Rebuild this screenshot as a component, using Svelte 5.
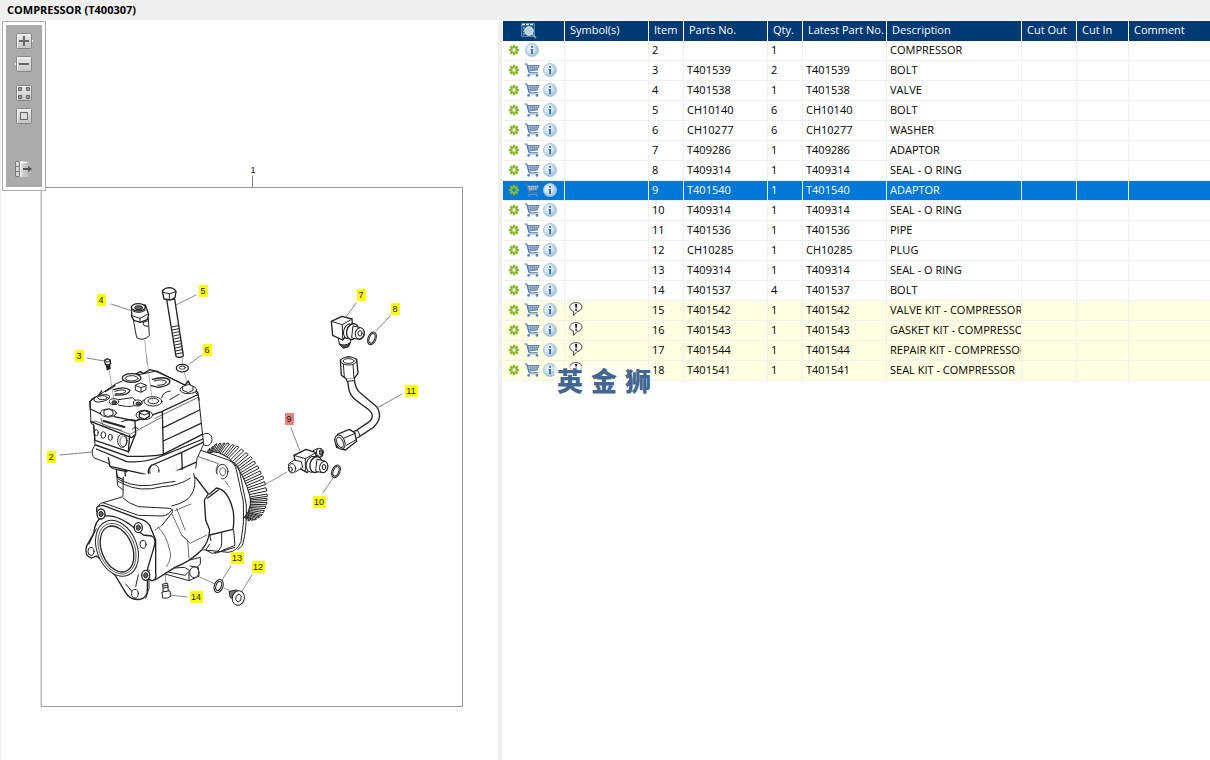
<script>
  const columns = [
    { key: 'item', label: 'Item', width: 35 },
    { key: 'part', label: 'Parts No.', width: 84 },
    { key: 'qty', label: 'Qty.', width: 35 },
    { key: 'latest', label: 'Latest Part No.', width: 84 },
    { key: 'desc', label: 'Description', width: 135 },
    { key: 'cutOut', label: 'Cut Out', width: 55 },
    { key: 'cutIn', label: 'Cut In', width: 52 },
    { key: 'comment', label: 'Comment' },
  ]

  const row = (item, part, qty, desc, kit = false) => ({ item, part, qty, latest: part, desc, kit })

  const rows = [
    row(2, '', 1, 'COMPRESSOR'),
    row(3, 'T401539', 2, 'BOLT'),
    row(4, 'T401538', 1, 'VALVE'),
    row(5, 'CH10140', 6, 'BOLT'),
    row(6, 'CH10277', 6, 'WASHER'),
    row(7, 'T409286', 1, 'ADAPTOR'),
    row(8, 'T409314', 1, 'SEAL - O RING'),
    row(9, 'T401540', 1, 'ADAPTOR'),
    row(10, 'T409314', 1, 'SEAL - O RING'),
    row(11, 'T401536', 1, 'PIPE'),
    row(12, 'CH10285', 1, 'PLUG'),
    row(13, 'T409314', 1, 'SEAL - O RING'),
    row(14, 'T401537', 4, 'BOLT'),
    row(15, 'T401542', 1, 'VALVE KIT - COMPRESSOR', true),
    row(16, 'T401543', 1, 'GASKET KIT - COMPRESSOR', true),
    row(17, 'T401544', 1, 'REPAIR KIT - COMPRESSOR', true),
    row(18, 'T401541', 1, 'SEAL KIT - COMPRESSOR', true),
  ]

  let selected = $state(9)

  // callout number, label centre, leader line end points
  const callouts = [
    { n: 2, x: 51, y: 457, line: [60, 455, 92, 452] },
    { n: 3, x: 79, y: 356, line: [87, 358, 104, 361] },
    { n: 4, x: 101, y: 300, line: [111, 304, 132, 311] },
    { n: 5, x: 203, y: 291, line: [196, 295, 176, 305] },
    { n: 6, x: 207, y: 350, line: [202, 355, 189, 364] },
    { n: 7, x: 361, y: 295, line: [356, 303, 346, 317] },
    { n: 8, x: 395, y: 309, line: [390, 316, 376, 331] },
    { n: 9, x: 289, y: 419, line: [291, 428, 300, 451] },
    { n: 10, x: 319, y: 502, line: [323, 493, 333, 478] },
    { n: 11, x: 411, y: 391, line: [402, 394, 377, 408] },
    { n: 12, x: 258, y: 567, line: [252, 575, 242, 591] },
    { n: 13, x: 237, y: 558, line: [231, 566, 222, 580] },
    { n: 14, x: 196, y: 597, line: [187, 597, 170, 595] },
  ]

  const outer = [[400, 284], [425, 266], [455, 264], [490, 275], [525, 302], [550, 336], [568, 375], [577, 420], [575, 450], [562, 480], [540, 495], [514, 497]]
  const inner = [[395, 298], [415, 290], [434, 294], [460, 308], [485, 334], [502, 362], [516, 395], [526, 428], [526, 450], [520, 470], [514, 482], [508, 488]]

  function along(points, t) {
    const p = t * (points.length - 1)
    const i = Math.min(Math.floor(p), points.length - 2)
    const f = p - i
    return points[i].map((v, k) => Math.round(v + (points[i + 1][k] - v) * f))
  }

  const TEETH = 27
  const teeth = Array.from({ length: TEETH }, (_, i) => {
    const a = along(inner, i / TEETH)
    const b = along(outer, i / TEETH)
    const c = along(outer, (i + 0.5) / TEETH)
    const d = along(inner, (i + 0.5) / TEETH)
    return `M${a} L${b} L${c} L${d}`
  }).join(' ')
</script>

{#snippet gear()}
  <svg width="12" height="12" viewBox="0 0 12 12">
    <g stroke="#84b52c" stroke-width="2.2">
      <path d="M6 0.8V11.2M0.8 6H11.2M2.3 2.3L9.7 9.7M9.7 2.3L2.3 9.7" />
    </g>
    <circle cx="6" cy="6" r="3.8" fill="#8bbb30" />
    <circle cx="6" cy="6" r="1.7" class="hole" />
  </svg>
{/snippet}

{#snippet cart()}
  <svg width="16" height="14" viewBox="0 0 16 14" fill="none">
    <path d="M0.5 1H2.8L5 9.5" stroke="#54779f" stroke-width="1.2" />
    <path d="M3.4 2.5H15.2L13.2 7L4.8 8Z" fill="#c3d2e6" stroke="#4f74a8" stroke-width="0.9" />
    <path d="M4 4.3H14.4M4.4 6H13.6M6 2.5L6.6 7.6M8.2 2.5L8.6 7.4M10.4 2.5V7.2M12.6 2.5L12 7" stroke="#5c80b0" stroke-width="0.6" />
    <path d="M4.8 9.8H13.8" stroke="#54779f" stroke-width="1.2" />
    <path d="M4.6 11.6H13" stroke="#9db4d0" stroke-width="0.6" />
    <circle cx="4.6" cy="12.4" r="1.3" fill="#4a86c4" />
    <circle cx="13" cy="12.4" r="1.3" fill="#4a86c4" />
  </svg>
{/snippet}

{#snippet info()}
  <svg width="14" height="14" viewBox="0 0 14 14">
    <circle cx="7" cy="7" r="6.6" fill="url(#infoFill)" stroke="#a5c4dc" stroke-width="0.8" />
    <path d="M6 3H8V4.8H6ZM5.4 6H8V11H6V7H5.4Z" fill="#4474aa" />
  </svg>
{/snippet}

{#snippet toolIcon(kind)}
  <svg width="20" height="18" viewBox="0 0 20 18">
    {#if kind === 'in'}
      <path d="M17.5 6L20 9L17.5 12Z" fill="#eee" stroke="#858585" stroke-width="0.6" />
    {:else if kind === 'out'}
      <path d="M2.5 6L0 9L2.5 12Z" fill="#eee" stroke="#858585" stroke-width="0.6" />
    {/if}
    {#if kind === 'toggle'}
      <rect x="1" y="1" width="16" height="16" fill="url(#fade)" />
      <path d="M1.5 1.5H5.5V16.5H1.5ZM1.5 6.5H5.5M1.5 11.5H5.5" fill="#d8d8d8" stroke="#7c7c7c" />
      <path d="M6.5 2V16M7 2.5H13" stroke="#fff" />
      <path d="M9 9H15" stroke="#555" stroke-width="2" />
      <path d="M14 6L18 9L14 12Z" fill="#555" />
    {:else}
      <rect x="2.5" y="1.5" width="15" height="15" rx="1" fill="url(#btnFill)" stroke="#858585" />
      <path d="M3.5 15.5V2.5H16.5" fill="none" stroke="#f4f4f4" />
    {/if}
    {#if kind === 'in'}
      <path d="M5 9H15M10 4V14" stroke="#666" stroke-width="2" />
    {:else if kind === 'out'}
      <path d="M5 9H15" stroke="#666" stroke-width="2" />
    {:else if kind === 'tiles'}
      <path d="M4.5 3.5H7.5V6.5H4.5ZM12.5 3.5H15.5V6.5H12.5ZM4.5 11.5H7.5V14.5H4.5ZM12.5 11.5H15.5V14.5H12.5Z" fill="#999" stroke="#666" />
    {:else if kind === 'fit'}
      <rect x="6.5" y="5.5" width="7" height="7" fill="#ddd" stroke="#666" />
    {/if}
  </svg>
{/snippet}

<svg class="defs" width="0" height="0" aria-hidden="true">
  <defs>
    <radialGradient id="infoFill" cx="0.4" cy="0.4">
      <stop offset="0" stop-color="#f2f8fc" />
      <stop offset="0.6" stop-color="#d3e4f1" />
      <stop offset="1" stop-color="#a9c8e0" />
    </radialGradient>
    <linearGradient id="btnFill" x2="0" y2="1">
      <stop offset="0" stop-color="#ececec" />
      <stop offset="1" stop-color="#c4c4c4" />
    </linearGradient>
    <linearGradient id="fade">
      <stop offset="0.3" stop-color="#e2e2e2" />
      <stop offset="1" stop-color="#ababab" />
    </linearGradient>
  </defs>
</svg>

<div class="app">
  <h1>COMPRESSOR (T400307)</h1>

  <main>
    <section class="drawing">
      <div class="toolbar">
        <div class="tools">
          <button aria-label="Zoom in">{@render toolIcon('in')}</button>
          <button aria-label="Zoom out">{@render toolIcon('out')}</button>
          <button class="spaced" aria-label="Tile view">{@render toolIcon('tiles')}</button>
          <button aria-label="Fit to window">{@render toolIcon('fit')}</button>
          <button class="last" aria-label="Toggle list">{@render toolIcon('toggle')}</button>
        </div>
      </div>

      <svg class="diagram" viewBox="0 20 498 740" fill="none" stroke="#222" stroke-linejoin="round" stroke-linecap="round">
        <rect x="41.5" y="187.5" width="421" height="519" stroke="#999" />
        <path d="M252.5 176V187" stroke="#888" />
        <text class="number" x="253" y="173">1</text>

        <!-- axis lines -->
        <g stroke="#777" stroke-width="0.8">
          <path d="M266 484L287 472M193 574L215 584M224 588L232 592M165 573L166 583" />
        </g>

        <!-- cylinder head and drive gear -->
        <g transform="translate(75 355) scale(0.33333)" stroke-width="3">
          <path d={teeth} fill="#fff" />
          <path d="M395 298L415 290L434 294L460 308L485 334L502 362L516 395L526 428L526 450L520 470L508 488" />

          <path d="M380 242C394 228 412 236 411 254C410 270 396 278 384 268" fill="#fff" />
          <path d="M372 284L460 315Q478 322 484 345L505 440Q510 500 498 560Q485 590 460 592L340 580V300Z" fill="#fff" />
          <path d="M466 318L480 325Q490 332 494 350L514 450Q516 520 503 570L488 584" />
          <ellipse cx="442" cy="350" rx="17" ry="22" />
          <ellipse cx="443" cy="350" rx="9" ry="12" stroke-width="2" />
          <path d="M370 305L430 326Q420 340 424 358M360 345L385 355L380 378L362 372M362 375Q395 400 405 430M450 378Q470 400 480 440" stroke-width="2" />

          <path d="M45 140L48 205L56 210L60 270L52 285Q50 310 66 312L100 325L108 338L124 344L128 370L150 385Q200 408 260 402Q330 395 358 372L366 310L386 268L370 120L340 96L246 48L175 62L120 88L70 122Z" fill="#fff" />
          <path d="M45 140Q52 128 68 125L80 108M90 110L120 92M175 62L196 50L205 56L225 44L246 50L330 90L340 78L348 96L368 112L372 135" stroke-width="4" />
          <path d="M45 140L46 162L84 180M118 185L180 198L260 170L366 120M48 200L170 248L182 238M180 198L182 236L160 292M262 170L265 295" stroke-width="4" />
          <path d="M240 190L368 128M48 202L60 198L165 238L258 188M78 190L84 212L140 226" stroke-width="2" />
          <path d="M56 210L60 256L160 290L164 242M265 218L374 165M265 258L378 205M264 298L382 238M62 270L158 304Q230 305 264 298M64 282L155 320Q210 325 268 300L384 252" stroke-width="4" />
          <path d="M100 308L105 334L228 362M232 330L320 292L384 262M228 364Q210 350 230 330M320 292L322 345M124 344L156 350M150 348L153 384M128 366Q190 398 252 388Q325 380 360 352M245 362L300 350L362 322" stroke-width="4" />
          <ellipse cx="238" cy="347" rx="14" ry="18" fill="#fff" />

          <g fill="#fff">
            <ellipse cx="170" cy="69" rx="28" ry="13" stroke-width="4" />
            <ellipse cx="170" cy="70" rx="19" ry="8" />
            <path d="M232 73Q270 62 284 76Q288 92 250 97L228 92" stroke-width="4" />
            <path d="M238 78Q262 70 274 80Q274 90 248 91" />
            <path d="M116 104Q150 92 165 106Q160 122 120 120" stroke-width="4" />
            <path d="M120 109Q144 100 153 109Q148 118 122 116" />
            <ellipse cx="80" cy="130" rx="24" ry="10" transform="rotate(-12 80 130)" />
            <ellipse cx="82" cy="128" rx="14" ry="6" />
            <ellipse cx="340" cy="104" rx="25" ry="12" />
            <path d="M324 94L340 88L354 94V106L340 113L324 106Z" />
            <path d="M182 90L196 84L213 90V104L198 112L182 106Z" />
            <path d="M182 92L198 98L213 92M198 98V110" />
            <ellipse cx="234" cy="139" rx="27" ry="14" />
            <ellipse cx="235" cy="138" rx="16" ry="8" />
            <ellipse cx="117" cy="140" rx="14" ry="9" />
            <ellipse cx="118" cy="142" rx="7" ry="5" fill="#555" />
            <ellipse cx="188" cy="144" rx="13" ry="9" />
            <ellipse cx="190" cy="146" rx="7" ry="5" fill="#555" />
            <ellipse cx="100" cy="174" rx="24" ry="12" />
            <path d="M88 166L102 162L114 168V180L98 185L88 180Z" />
            <ellipse cx="208" cy="180" rx="25" ry="14" />
            <path d="M193 172L208 166L223 172V184L208 193L193 186Z" stroke-width="4" />
            <path d="M193 174L208 180L223 174" />
          </g>
          <path d="M130 150Q160 158 178 152M130 134L172 128L182 136M200 140L208 134M260 128Q264 110 286 108M284 134L312 118M140 200Q170 190 182 196M172 222Q180 212 190 222" />
          <ellipse cx="64" cy="233" rx="6" ry="9" />
          <ellipse cx="85" cy="240" rx="7" ry="10" />
          <ellipse cx="106" cy="247" rx="6" ry="9" />
          <ellipse cx="142" cy="257" rx="14" ry="20" />
          <ellipse cx="145" cy="259" rx="10" ry="16" stroke-width="2" />
          <path d="M86 198L148 216" stroke-width="6" />
          <path d="M124 350L128 392L148 408Q220 430 300 412L350 385M130 380Q200 418 300 398L352 372" />
          <path d="M103 48L117 135M214 0L232 136M322 8V30M328 50L338 92" stroke="#888" stroke-width="2" />
        </g>

        <!-- crankcase and front flange -->
        <g transform="translate(75 480) scale(0.33333)" stroke-width="3">
          <path d="M145 -10V55L76 72L60 110L70 240L150 330L215 300L300 262L345 235L392 205L404 182L480 170L500 60L404 -40Z" fill="#fff" stroke="none" />
          <path d="M145 -8L144 50L84 68Q66 72 66 94M145 55Q160 70 190 80L285 85Q298 88 290 100L262 135M84 68L190 106L262 108Q284 104 290 90M145 12Q195 38 262 20Q310 18 345 -5M140 2Q190 28 260 10L300 4M356 -20Q368 20 345 50Q330 68 290 78" />
          <path d="M362 -8L400 42L388 60L392 120L404 150Q402 185 380 210Q345 245 300 262L240 300M404 42L424 24Q460 28 475 95Q478 125 474 148L404 165M398 54L430 30" stroke-width="4" />
          <path d="M290 100L320 165L345 190L396 165M305 85L330 150M320 165L338 180L342 235M300 92L348 72M262 135L240 150M250 142Q275 165 285 215Q292 230 275 260" stroke-width="2" />
          <path d="M404 165L408 182M440 160V190Q438 216 412 220L392 210L404 192M440 212L480 196L476 150M420 220L480 202" />

          <path d="M66 94Q60 76 84 76L190 116Q210 118 224 136L242 180V280Q246 300 230 302L190 280L80 120Z" fill="#fff" stroke-width="4" />
          <path d="M56 160L34 200Q28 230 50 234L64 228L80 240L120 285L150 335Q165 362 195 358Q218 352 217 330L218 265L236 205Q246 176 230 168L205 165L160 130Q110 98 80 112Q60 122 56 160Z" fill="#fff" stroke-width="4" />
          <path d="M212 355L222 325V270M42 192L64 146M152 312L184 350M190 284L182 320" />
          <ellipse cx="126" cy="205" rx="60" ry="87" transform="rotate(-22 126 205)" fill="#fff" />
          <ellipse cx="126" cy="206" rx="53" ry="79" transform="rotate(-22 126 206)" stroke-width="2" />
          <ellipse cx="126" cy="207" rx="46" ry="72" transform="rotate(-22 126 207)" stroke-width="4" />
          <g fill="#fff">
            <ellipse cx="48" cy="214" rx="9" ry="12" />
            <ellipse cx="204" cy="193" rx="9" ry="12" />
            <ellipse cx="180" cy="341" rx="10" ry="13" />
          </g>
          {#each [[78, 102], [190, 143], [212, 286]] as [x, y]}
            <ellipse cx={x} cy={y} rx="12" ry="15" fill="#fff" stroke-width="4" />
            <ellipse cx={x} cy={y} rx="6" ry="8" fill="#666" />
          {/each}

          <path d="M270 282L342 302L372 288L370 262L345 258M280 276L330 286L345 272L328 262L300 264M342 302V280M345 240L376 232V252L366 262" />
          <ellipse cx="358" cy="277" rx="14" ry="16" fill="#fff" />
          <path d="M264 312L278 310L280 334L266 336ZM264 318L278 316M265 324L279 322" />
          <path d="M262 336L284 332L288 348Q278 358 264 354Z" fill="#fff" />
          <ellipse cx="431" cy="318" rx="13" ry="20" transform="rotate(20 431 318)" fill="#fff" />
          <ellipse cx="431" cy="318" rx="8" ry="14" transform="rotate(20 431 318)" />
          <path d="M464 334L484 330L502 344L480 360L466 352Z" fill="#777" />
          <ellipse cx="490" cy="354" rx="18" ry="22" transform="rotate(15 490 354)" fill="#fff" />
          <path d="M484 348L492 342L499 348L497 361L489 366L483 360Z" />
        </g>

        <!-- adaptors and pipe -->
        <g transform="translate(270 280) scale(0.33333)" stroke-width="3" fill="#fff">
          <path d="M205 176L208 192L220 204L236 200L242 186V174Z" />
          <path d="M208 192Q225 200 240 188L232 202L220 204Z" fill="#555" />
          <path d="M184 124L216 109L246 117L248 145L218 180L188 166Z" stroke-width="4" />
          <path d="M184 124L217 134L246 117M217 134L218 180" />
          <ellipse cx="236" cy="154" rx="15" ry="22" transform="rotate(15 236 154)" />
          <ellipse cx="248" cy="155" rx="18" ry="24" transform="rotate(15 248 155)" stroke-width="4" />
          <path d="M250 138L272 143Q286 150 283 166Q278 180 266 178L246 174Z" />
          <ellipse cx="269" cy="160" rx="13" ry="17" transform="rotate(15 269 160)" />
          <ellipse cx="270" cy="160" rx="6" ry="8" />
          <ellipse cx="306" cy="175" rx="12" ry="20" transform="rotate(22 306 175)" />
          <ellipse cx="306" cy="175" rx="8" ry="15" transform="rotate(22 306 175)" />

          <path d="M232 296L236 325Q240 348 262 364L294 388Q320 408 294 428L252 456L264 472L308 444Q342 414 320 380L272 340Q256 328 253 298Z" stroke-width="4" />
          <path d="M211 240L236 230L260 238L264 280L252 296L230 298L214 286Z" stroke-width="4" />
          <path d="M230 298V304L254 302V294M220 252L223 292M249 252L252 294" />
          <ellipse cx="236" cy="243" rx="24" ry="12" />
          <ellipse cx="236" cy="243" rx="16" ry="7" />
          <path d="M250 454L264 452L270 468L258 476" />
          <path d="M194 478L204 462L238 448L254 458L260 484L226 510L200 502Z" stroke-width="4" />
          <path d="M222 474L256 460M229 496L260 478" />
          <ellipse cx="210" cy="486" rx="14" ry="22" transform="rotate(-22 210 486)" />
          <ellipse cx="210" cy="487" rx="9" ry="16" transform="rotate(-22 210 487)" />

          <path d="M130 512L144 505L160 512L158 528L146 534Z" />
          <ellipse cx="149" cy="517" rx="10" ry="12" />
          <ellipse cx="153" cy="517" rx="5" ry="8" fill="#777" />
          <path d="M72 526L108 508L138 518L136 545L112 578L90 566L76 548Z" stroke-width="4" />
          <path d="M72 526L106 536L138 518M106 536V575" />
          <path d="M56 552L72 540L94 545L98 562L76 576L60 574Z" />
          <ellipse cx="66" cy="565" rx="11" ry="14" />
          <ellipse cx="62" cy="568" rx="5" ry="7" />
          <ellipse cx="127" cy="553" rx="18" ry="24" transform="rotate(15 127 553)" />
          <ellipse cx="138" cy="554" rx="18" ry="24" transform="rotate(15 138 554)" stroke-width="4" />
          <path d="M142 538L164 543Q176 550 173 566Q168 580 156 578L138 574Z" />
          <ellipse cx="161" cy="561" rx="12" ry="17" transform="rotate(15 161 561)" />
          <ellipse cx="162" cy="561" rx="5" ry="8" />
          <ellipse cx="198" cy="574" rx="12" ry="20" transform="rotate(22 198 574)" />
          <ellipse cx="198" cy="574" rx="8" ry="15" transform="rotate(22 198 574)" />
        </g>

        <!-- valve, long bolt, screw and washer -->
        <g transform="translate(60 275) scale(0.33333)" stroke-width="3" fill="#fff">
          <path d="M219 130L230 188Q250 200 268 182L265 130Z" />
          <path d="M215 98V125L222 136L240 142L262 134L266 118L256 90Z" stroke-width="4" />
          <path d="M216 122L240 130L262 118M240 130V142M220 108Q235 118 256 106M248 140L252 152L264 154M250 142L262 138" />
          <ellipse cx="235" cy="97" rx="21" ry="11" stroke-width="4" />
          <ellipse cx="236" cy="98" rx="12" ry="6" fill="#666" />
          <path d="M254 196L262 268" stroke="#888" stroke-width="2" />
          <path d="M320 74L348 244Q358 252 370 242L344 72Z" stroke-width="4" />
          <path d="M336 156L354 152M338 165L356 161M339 174L357 170M341 183L358 179M342 192L360 188M343 201L361 197M345 210L363 206M346 219L364 215M347 228L366 224M348 237L368 233" />
          <path d="M307 48Q314 38 330 38Q344 40 348 50L345 68L332 75L312 72Z" stroke-width="4" />
          <path d="M307 52L328 56L348 50M328 56V74" />
          <path d="M134 256L140 252L150 254L152 266L144 271L136 268ZM139 270L149 270L150 281L142 284ZM140 275H149M141 279H150" stroke-width="4" />
          <ellipse cx="143" cy="257" rx="7" ry="4" />
          <ellipse cx="367" cy="279" rx="18" ry="11" stroke-width="4" />
          <ellipse cx="367" cy="278" rx="9" ry="5" />
          <path d="M350 284Q367 298 384 284" />
        </g>

        {#each callouts as { n, x, y, line: [x1, y1, x2, y2] }}
          {@const half = n > 9 ? 6 : 4}
          <g class:active={n === selected}>
            <line {x1} {y1} {x2} {y2} stroke="#666" stroke-width="0.8" />
            <rect class="tag" x={x - half} y={y - 6} width={half * 2 + 1} height="12" />
            <text class="number" {x} y={y + 3}>{n}</text>
          </g>
        {/each}
      </svg>
    </section>

    <section class="parts">
      <table>
        <colgroup>
          <col style:width="62px" />
          <col style:width="84px" />
          {#each columns as c}
            <col style:width={c.width ? `${c.width}px` : 'auto'} />
          {/each}
        </colgroup>
        <thead>
          <tr>
            <th class="lookup" aria-label="Search">
              <svg width="16" height="16" viewBox="0 0 16 16" fill="none">
                <path d="M0.5 0.5H13.5V13.5H0.5Z" fill="#1f5a8c" stroke="#4f86b4" />
                <path d="M1 1.5H13" stroke="#dcebf7" stroke-width="1.6" stroke-dasharray="3 1" />
                <path d="M2 5H4M2 8H3M2 11H4" stroke="#a9c8e0" />
                <path d="M11 11L15 15" stroke="#7f9cb8" stroke-width="2" />
                <circle cx="8" cy="8" r="4.2" fill="#b9d0e2" stroke="#eef5fa" />
              </svg>
            </th>
            <th>Symbol(s)</th>
            {#each columns as c}<th>{c.label}</th>{/each}
          </tr>
        </thead>
        <tbody>
          {#each rows as r}
            <tr class:kit={r.kit} class:selected={r.item === selected} onclick={() => selected = r.item}>
              <td>
                <div class="actions">
                  <button aria-label="Options">{@render gear()}</button>
                  {#if r.part}<button aria-label="Add to cart">{@render cart()}</button>{/if}
                  <button aria-label="Information">{@render info()}</button>
                </div>
              </td>
              <td>
                {#if r.kit}
                  <svg class="note" width="16" height="16" viewBox="-1 -1 16 16">
                    <path d="M4.5 9.2C-1 8 -0.5 0.6 7 0.6C14.5 0.6 15 8.4 8 9.6L4.6 13.4Z" fill="#fff" stroke="#444" />
                    <path d="M6 2H8.2L7.6 6.4H6.6ZM6.2 7.2H8V8.8H6.2Z" fill="#111" />
                  </svg>
                {/if}
              </td>
              {#each columns as c}<td>{r[c.key] ?? ''}</td>{/each}
            </tr>
          {/each}
        </tbody>
      </table>
      <div class="brand" lang="zh-CN"><span>英</span><span>金</span><span>狮</span></div>
    </section>
  </main>
</div>

<style>
  :global(body) { background: #fff; }

  .app {
    display: flex; flex-direction: column; min-height: 100vh;
    font-family: "Open Sans", "Noto Sans", sans-serif; font-size: 11px; color: #000;
  }
  .defs { position: absolute; }

  h1 { margin: 0; padding: 0 7px; background: #f0f0f0; font-size: 11px; line-height: 20px; font-weight: 700; }

  main { flex: 1; display: grid; grid-template-columns: 498fr 712fr; }

  button { border: 0; padding: 0; background: none; display: flex; align-items: center; justify-content: center; }

  .drawing { position: relative; box-sizing: border-box; box-shadow: inset 1px 0 #f0f0f0; }
  .diagram { display: block; width: 100%; }
  .number { fill: #111; stroke: none; font: 9px "Liberation Sans", sans-serif; text-anchor: middle; }
  .tag { fill: #ff0; stroke: none; }
  .active .tag { fill: #f08080; }

  .toolbar { position: absolute; top: 1px; left: 2px; padding: 3px; border: 1px solid #aaa; background: #fff; }
  .tools {
    box-sizing: border-box; width: 36px; height: 162px; padding: 7px 0 9px; background: #ababab;
    display: flex; flex-direction: column; align-items: center; gap: 5px;
  }
  .spaced { margin-top: 6px; }
  .last { margin-top: auto; }

  .parts { position: relative; min-width: 0; border-left: 4px solid #f0f0f0; padding: 1px 0 0 1px; }

  table { width: 100%; table-layout: fixed; border-collapse: separate; border-spacing: 0; }
  th, td {
    box-sizing: border-box; height: 20px; padding: 0 0 0 3px; line-height: 18px; vertical-align: top;
    border-right: 1px solid #f0f0f0; overflow: hidden; white-space: nowrap; text-align: left;
  }
  th { background: #003a75; color: #fff; font-weight: 400; padding-left: 5px; border-right-color: #fff; }
  td { border-bottom: 1px solid #f0f0f0; }
  th:last-child, td:last-child { border-right: 0; }
  .lookup { padding: 2px 10px 0 0; }
  .lookup svg { display: block; margin: 0 auto; }

  .kit td { background: #ffffe1; }
  .selected td { background: #0078d7; color: #fff; }

  td:first-child { padding-left: 2px; }
  .actions { display: flex; }
  .actions button { width: 18px; height: 18px; }
  .hole { fill: #fff; }
  .selected .hole { fill: #0078d7; }
  .note { display: block; }

  .brand {
    position: absolute; top: 346px; left: 52px; display: flex; gap: 8px; padding: 0 3px;
    background: rgba(255, 255, 255, 0.6); color: #41668f;
    font: 900 26px/28px "Noto Sans CJK SC", sans-serif;
  }
</style>
